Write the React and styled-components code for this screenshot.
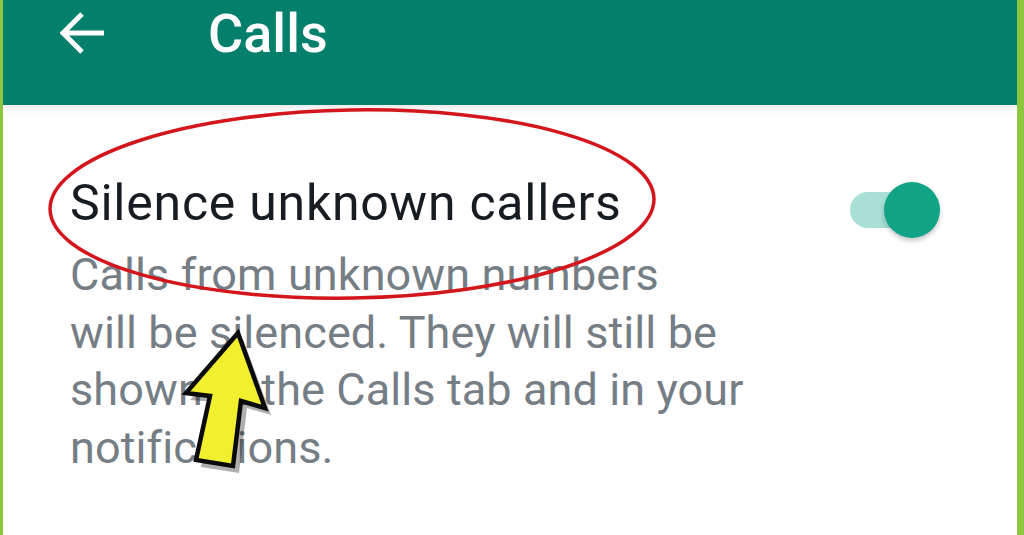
import React from 'react'
import styled, { createGlobalStyle } from 'styled-components'

const GlobalStyle = createGlobalStyle`
  html, body {
    margin: 0;
    padding: 0;
    background: #ffffff;
    font-family: Roboto, "Liberation Sans", Arial, sans-serif;
  }
  #root {
    height: 535px;
  }
`

const Frame = styled.div`
  position: relative;
  width: 1024px;
  height: 535px;
  box-sizing: border-box;
  border-left: 3px solid #8cc63e;
  border-right: 7px solid #8cc63e;
  background: #ffffff;
  overflow: hidden;
`

const TopBar = styled.header`
  display: flex;
  align-items: flex-start;
  height: 105px;
  padding: 12px 0 0 57px;
  box-sizing: border-box;
  background: #047f6b;
  box-shadow: 0 3px 9px rgba(0, 0, 0, 0.1);
  position: relative;
  z-index: 1;
`

const BackButton = styled.button`
  display: flex;
  align-items: center;
  justify-content: center;
  width: 46px;
  height: 42px;
  padding: 0;
  border: none;
  background: none;
  color: #ffffff;
`

const BarTitle = styled.h1`
  margin: -5px 0 0 102px;
  color: #ffffff;
  font-size: 54px;
  font-weight: 500;
  line-height: 1;
`

const Content = styled.main`
  display: flex;
  align-items: flex-start;
  padding: 68px 77px 0 67px;
`

const TextColumn = styled.div`
  flex: 1;
`

const SettingTitle = styled.div`
  color: #161c22;
  font-size: 50px;
  line-height: 60px;
  letter-spacing: 0.75px;
`

const SettingText = styled.p`
  margin: 13px 0 0;
  color: #757d85;
  font-size: 45px;
  line-height: 57.5px;
  letter-spacing: 0.1px;
`

const Switch = styled.div`
  position: relative;
  width: 90px;
  height: 56px;
  margin-top: 9px;
  flex-shrink: 0;

  &::before {
    content: '';
    position: absolute;
    left: 0;
    top: 10px;
    width: 62px;
    height: 36px;
    border-radius: 18px;
    background: ${props => (props.$on ? '#a8e0d6' : '#cfd4d8')};
  }

  &::after {
    content: '';
    position: absolute;
    right: 0;
    top: 0;
    width: 56px;
    height: 56px;
    border-radius: 50%;
    background: ${props => (props.$on ? '#10a386' : '#f1f1f1')};
    box-shadow: 0 3px 5px rgba(0, 0, 0, 0.22);
  }
`

const Overlay = styled.svg`
  position: absolute;
  left: -3px;
  top: 0;
  width: 1024px;
  height: 535px;
  pointer-events: none;
  z-index: 2;
`

const BackArrow = () => (
  <svg width="46" height="42" viewBox="0 0 46 42" fill="none">
    <path
      d="M44 21H4M22 2L3 21l19 19"
      stroke="currentColor"
      strokeWidth="5"
      strokeLinecap="butt"
      strokeLinejoin="miter"
    />
  </svg>
)

const Annotations = () => (
  <Overlay viewBox="0 0 1024 535">
    <ellipse
      cx="352"
      cy="204"
      rx="302"
      ry="94"
      fill="none"
      stroke="#d3151c"
      strokeWidth="3.5"
      transform="rotate(-1 352 204)"
    />
    <polygon
      points="240,336 268,412 244,405 236,470 198,464 212,399 187,397"
      fill="#1a1a1a"
      opacity="0.35"
      transform="translate(3 3)"
    />
    <polygon
      points="238,333 265,408 241,401 233,466 196,460 210,396 186,393"
      fill="#f2ef2e"
      stroke="#0a0a0a"
      strokeWidth="4.5"
      strokeLinejoin="miter"
    />
  </Overlay>
)

export default function App() {
  return (
    <>
      <GlobalStyle />
      <Frame>
        <TopBar>
          <BackButton aria-label="Back">
            <BackArrow />
          </BackButton>
          <BarTitle>Calls</BarTitle>
        </TopBar>
        <Content>
          <TextColumn>
            <SettingTitle>Silence unknown callers</SettingTitle>
            <SettingText>
              Calls from unknown numbers
              <br />
              will be silenced. They will still be
              <br />
              shown in the Calls tab and in your
              <br />
              notifications.
            </SettingText>
          </TextColumn>
          <Switch $on />
        </Content>
        <Annotations />
      </Frame>
    </>
  )
}
